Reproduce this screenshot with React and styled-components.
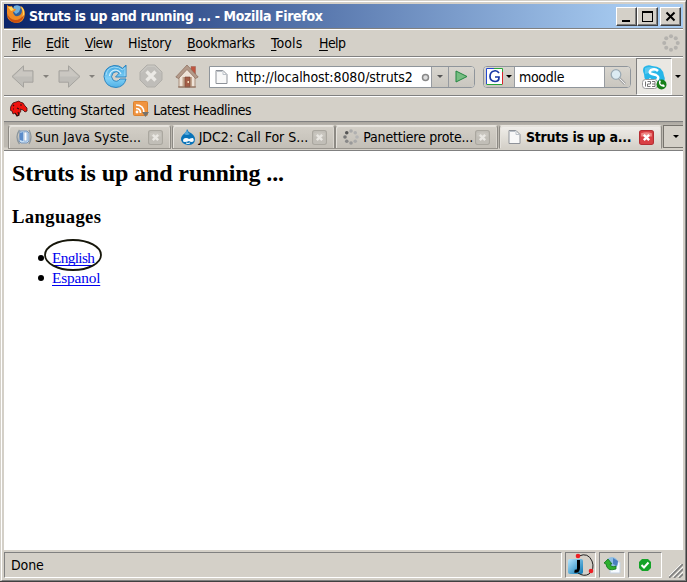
import React from "react";
import styled, { createGlobalStyle, css } from "styled-components";

const Global = createGlobalStyle`
  * { box-sizing: border-box; }
  html, body { margin: 0; padding: 0; overflow: hidden; }
`;

const Frame = styled.div`
  width: 687px;
  height: 582px;
  padding: 1px 0 0 1px;
  background: #d4d0c8;
  border-right: 1px solid #404040;
  border-bottom: 1px solid #404040;
  font: 14px/16px "DejaVu Sans Condensed", "DejaVu Sans", sans-serif;
  color: #000;
  cursor: default;
`;
const Bevel = styled.div`
  height: 100%;
  padding: 2px 2px 2px 2px;
  border: solid;
  border-width: 1px;
  border-color: #fff #808080 #808080 #fff;
  display: flex;
  flex-direction: column;
`;
const Label = styled.span`
  white-space: pre;
  letter-spacing: ${(p) => p.$ls ?? -0.2}px;
  flex: none;
`;
const Icon = styled.svg`
  display: block;
  flex: none;
  width: ${(p) => p.$w}px;
  height: ${(p) => p.$h ?? p.$w}px;
  margin: ${(p) => p.$m ?? "0"};
`;

const TitleBar = styled.header`
  height: 24px;
  padding: 0 2px 0 2px;
  display: flex;
  align-items: center;
  background: linear-gradient(90deg, #0a246a, #a6caf0 92%);
  color: #fff;
  font-weight: bold;
`;
const TitleText = styled(Label)`
  flex: 1;
  margin-left: 3px;
`;
const WinButton = styled.button`
  width: 21px;
  height: 19px;
  margin: 0 0 0 ${(p) => p.$gap || 0}px;
  padding: 0;
  display: grid;
  place-items: center;
  background: #d4d0c8;
  border: 1px solid;
  border-color: #fff #404040 #404040 #fff;
  box-shadow: inset -1px -1px #808080;
`;
const band = css`
  display: flex;
  align-items: center;
  border-bottom: 1px solid #808080;
  box-shadow: inset 0 1px #fff;
`;
const MenuBar = styled.nav`
  ${band}
  height: 29px;
  padding: 0 3px 0 8px;
  border-top: 1px solid #808080;
`;
const MenuItem = styled.span`
  width: ${(p) => p.$w}px;
  flex: none;
  white-space: pre;
  letter-spacing: ${(p) => p.$ls}px;
  u { text-underline-offset: 2px; text-decoration-skip-ink: none; text-decoration-thickness: 1px; }
`;
const Grow = styled.div`flex: 1;`;
const NavBar = styled.div`
  ${band}
  height: 39px;
  padding-left: 7px;
`;
const Caret = styled.i`
  width: 0;
  height: 0;
  flex: none;
  margin: ${(p) => p.$m || "0"};
  border: solid transparent;
  border-width: 3px 3px 0;
  border-top-color: ${(p) => p.$c || "#000"};
`;
const Field = styled.div`
  width: ${(p) => p.$w}px;
  height: 22px;
  margin: 1px 0 0 ${(p) => p.$gap}px;
  display: flex;
  flex: none;
  background: #fff;
  border: 1px solid #8f959b;
  border-radius: ${(p) => p.$left || 0}px 4px 4px ${(p) => p.$left || 0}px;
  overflow: hidden;
`;
const FieldText = styled.div`
  flex: 1;
  display: flex;
  align-items: center;
  padding-left: 4px;
`;
const FieldButton = styled.div`
  width: ${(p) => p.$w}px;
  display: flex;
  align-items: center;
  justify-content: center;
  background: linear-gradient(#d8d5ce, #c9c6bf);
  border: solid #979ba0;
  border-width: 0 ${(p) => (p.$first ? 1 : 0)}px 0 ${(p) => (p.$first ? 0 : 1)}px;
`;
const Extension = styled.div`
  width: 36px;
  height: 37px;
  margin-left: 5px;
  display: grid;
  place-items: center;
  background: #eae8e3;
  border: solid;
  border-width: 1px;
  border-color: #808080 #fff #fff #808080;
`;
const Bookmarks = styled.div`
  ${band}
  height: 26px;
  padding: 2px 0 0 6px;
`;
const TabStrip = styled.div`
  height: 29px;
  padding: 3px 0 2px 4px;
  display: flex;
  background: linear-gradient(#aaa69f, #bdb9b1 4px, #bdb9b1 25px, #d4d0c8 26px);
  border-bottom: 1px solid #808080;
`;
const Tab = styled.div`
  width: 163px;
  height: 24px;
  margin-right: ${(p) => (p.$active ? 1 : 0.67)}px;
  padding: 0 7px 0 7px;
  flex: none;
  display: flex;
  align-items: center;
  background: ${(p) => (p.$active ? "linear-gradient(#f0eeea, #d4d0c8)" : "linear-gradient(#d3cfc7, #c3bfb7)")};
  border: 1px solid #8d8a84;
  border-top-color: #e8e5df;
  border-bottom-color: ${(p) => (p.$active ? "#d4d0c8" : "#99958e")};
  border-radius: 3px 3px 0 0;
  box-shadow: inset 1px 1px #e5e2dc, inset -1px 0 #dad6cf;
  font-weight: ${(p) => (p.$active ? "bold" : "normal")};
`;
const TabTitle = styled(Label)`
  flex: 1;
  min-width: 0;
  margin-left: ${(p) => p.$gap}px;
`;
const TabMenu = styled.div`
  flex: 1;
  height: 23px;
  display: grid;
  place-items: center;
  padding-left: 5px;
  background: #d4d0c8;
  border: 1px solid #77746e;
  border-right: 0;
`;
const Page = styled.main`
  flex: 1;
  padding: 0 8px;
  background: #fff;
  font-family: "Liberation Serif", serif;
`;
const Heading = styled.h2`
  margin: 0;
  padding-top: 9px;
  font-size: 24px;
  line-height: 27px;
  letter-spacing: -0.1px;
`;
const SubHeading = styled.h3`
  margin: 19px 0 0;
  font-size: 18.7px;
  line-height: 22px;
  letter-spacing: 0.35px;
`;
const List = styled.ul`
  margin: 20px 0 0;
  padding: 0 0 0 26px;
  list-style: none;
`;
const Item = styled.li`
  height: 20px;
  display: flex;
  align-items: center;
  position: relative;
  font-size: 15.3px;
  line-height: 18px;
`;
const Link = styled.a`
  color: #0000ee;
  text-decoration: underline;
  text-decoration-skip-ink: none;
  text-decoration-thickness: 1px;
  text-underline-offset: 2px;
  letter-spacing: ${(p) => p.$ls}px;
  margin-left: 8px;
`;
const Ring = styled.svg`
  position: absolute;
  left: 6px;
  top: -9px;
  width: 58px;
  height: 32px;
`;
const StatusBar = styled.footer`
  height: 28px;
  padding-top: 2px;
  display: flex;
  gap: 3px;
`;
const Panel = styled.div`
  width: ${(p) => p.$w}px;
  height: 26px;
  padding: ${(p) => (p.$text ? "0 6px" : "0")};
  display: flex;
  align-items: center;
  justify-content: ${(p) => (p.$text ? "flex-start" : "center")};
  border: 1px solid;
  border-color: #808080 #fff #fff #808080;
`;

const Firefox = () => (
  <Icon $w={20} viewBox="0 0 20 20" $m="-4px 0 0 0">
    <circle cx="11" cy="9" r="7" fill="#2d5f9c" />
    <path d="M8 2q4-2 7 1l-2 5-3 2-3-3z" fill="#71b0dc" />
    <path d="M1 1q2 2 5 1 0 3 4 3 0 2-3 3 1 5 5 4 4-1 4-6l-2-4q5 2 5 8-1 9-9 9Q1 18 1 10z" fill="#ef8a24" />
    <path d="M1 9q2 6 8 7 6 0 9-6-1 8-8 9-8-1-9-10z" fill="#c9500f" />
    <path d="M2 3l4 0 2 3-3 1zm13-1q4 3 3 9l-2 2q2-4 0-8" fill="#ffd65a" />
  </Icon>
);
const Arrow = ({ right }) => (
  <Icon $w={23} viewBox="0 0 23 23">
    <g transform={right ? "translate(23 0) scale(-1 1)" : undefined}>
      <path d="M1 11.500L12.500 .8v5h9.500v11.400h-9.500v5z" fill="#bfbdb8" stroke="#a5a39e" />
      <path d="M2.700 11.500L11.500 3.200v3.600H21v4.700z" fill="#cac7c1" />
    </g>
  </Icon>
);
const Reload = () => (
  <Icon $w={24} $m="0 0 0 8px" viewBox="0 0 24 24">
    <defs><linearGradient id="water" x2="0" y2="1"><stop stopColor="#3fa3dc" /><stop offset=".6" stopColor="#7fd0f7" /><stop offset="1" stopColor="#4fb0e6" /></linearGradient></defs>
    <path d="M23 1v12H12.500l4-4.300Q13 6.500 10 9q-3 4 0 7 4 3 7-1h6q-2 8-10 8.500Q2 23 1 12.500 1.500 3 11 1.500q5-.5 8.500 2.800z" fill="url(#water)" stroke="#2f86c0" />
    <path d="M3 11q1-7 8-8 5 0 8.500 3L22 3.500V12" fill="none" stroke="#b6e4fb" strokeWidth=".8" />
    <path d="M18 10q-2-4-6-4-5 1-5.500 6" fill="none" stroke="#d8f2ff" strokeWidth="1.200" />
  </Icon>
);
const Stop = () => (
  <Icon $w={24} $m="0 0 0 12px" viewBox="0 0 24 24">
    <path d="M8 1h8l7 7v8l-7 7H8l-7-7V8z" fill="#bfbdb9" stroke="#b0aea9" />
    <path d="M7.500 7.500l9 9m0-9l-9 9" stroke="#ebe9e5" strokeWidth="3.300" />
    <path d="M2.200 8.500l6.300-6.300h7l6.300 6.300" fill="none" stroke="#cdcbc6" />
  </Icon>
);
const Home = () => (
  <Icon $w={24} $m="0 0 0 12px" viewBox="0 0 24 24">
    <path d="M16 2.500h4.500V10H16z" fill="#c05540" stroke="#9f6a5a" strokeWidth=".6" />
    <path d="M4 12l8-8.500L20 12v11H4z" fill="#eee2d7" stroke="#a98f7c" />
    <path d="M.8 13L12 1l11.200 12-2.700 1.500L12 5.500l-8.500 9z" fill="#b39a8a" stroke="#8a6c5a" strokeWidth=".7" />
    <path d="M7.500 13h3v10h-3zm6.500 0h3v10h-3z" fill="#c2a68f" />
    <path d="M10 13h5v10h-5z" fill="#a45d47" stroke="#7b4534" strokeWidth=".6" />
    <path d="M12.500 17h1.500v2h-1.500z" fill="#f5dfbc" />
    <path d="M3 23h18" stroke="#8a6857" />
  </Icon>
);
const Document = () => (
  <Icon $w={13} $h={16} $m="0 0 0 1px" viewBox="0 0 13 16">
    <path d="M1 1.500h7l4 4v9H1z" fill="#f8f8f8" stroke="#8e9299" />
    <path d="M8 1.500v4h4M2 2.500h5" fill="none" stroke="#bbc1c8" />
  </Icon>
);
const Feed = () => (
  <Icon $w={17} $h={17} $m="0 0 0 8px" viewBox="0 0 17 17">
    <rect x=".5" y=".5" width="14" height="14" rx="1" fill="#f09440" stroke="#dc832f" />
    <path d="M3 4q8 0 8 8M3 7.500q4.500 0 4.500 4.500" fill="none" stroke="#fff" strokeWidth="1.700" />
    <circle cx="4" cy="11" r="1.400" fill="#fff" />
    <path d="M9 11h7l-3.500 5z" fill="#77736c" />
  </Icon>
);
const Dragon = () => (
  <Icon $w={18} $h={17} $m="-2px 0 0 0" viewBox="0 0 18 17">
    <path d="M1 6l2-3 3-1 3-1 1 1 3 1 2 3 2 2v3l-2 1-2-2-3-1 1 2-2 3-1 2-3-3-2 1-1-3-2-1z" fill="#f0130d" stroke="#3d0f0e" strokeWidth=".8" />
    <path d="M5 13l2 3 2-1-1-3M3 5l1 1M3 9l1 0M10 5h2M7 8l2 1" fill="none" stroke="#350d0c" strokeWidth="1.200" />
  </Icon>
);
const dots = Array.from({ length: 8 }, (_, i) => [8 + 6 * Math.sin((i * Math.PI) / 4), 8 - 6 * Math.cos((i * Math.PI) / 4)]);
const Throbber = ({ dim }) => (
  <Icon $w={dim ? 18 : 16} viewBox="0 0 16 16">
    {dots.map(([x, y], i) => (
      <circle key={i} cx={x} cy={y} r="1.8" fill={dim ? "#b4b2ae" : ["#aaa", "#b0b0b0", "#b5b5b5", "#aaa", "#999", "#888", "#777", "#555"][i]} />
    ))}
  </Icon>
);
const SunJava = () => (
  <Icon $w={16} viewBox="0 0 16 16">
    <path d="M3.500 1q-5 7 0 14M13 1q4 7 0 14" fill="none" stroke="#8d979d" strokeWidth="1.300" />
    <path d="M4 2h7l2 2v8l-2 2H5l-2-2z" fill="#c5def5" stroke="#7996ba" />
    <path d="M4 4l3-1v9l-3-1z" fill="#5b8ccb" />
    <path d="M8 3h3v9H8z" fill="#fff" stroke="#7d9fc8" strokeWidth=".7" />
  </Icon>
);
const Drupal = () => (
  <Icon $w={16} viewBox="0 0 16 16">
    <path d="M7 0q1 3 4 4 4 3 4 6 0 6-7 6-7-1-7-6 0-3 4-6 2-2 2-4" fill="#0873b9" />
    <path d="M4 5q2-2 3-4 1 3 3 4-3 2-6 0" fill="#55a7d9" />
    <path d="M3 12q0-3 3-3 2 0 3 1 2-1 4-1 2 3-1 4-2 0-3-1-2 1-4 1-2 0-2-1" fill="#f5fbff" />
    <path d="M6 14q2 1 4 0" fill="none" stroke="#fff" />
  </Icon>
);
const CloseIcon = ({ active }) => (
  <Icon $w={15} viewBox="0 0 14 14">
    <rect x=".5" y=".5" width="13" height="13" rx="2" fill={active ? "#d93f43" : "#c1beb7"} stroke={active ? "#b52d32" : "#aaa79f"} />
    <path d="M2 3q5-2 10 0v3H2z" fill={active ? "#ef8986" : "#c9c6bf"} />
    <path d="M4.500 4.500l5 5m0-5l-5 5" stroke={active ? "#fff" : "#e9e7e2"} strokeWidth="2.300" />
  </Icon>
);
const Skype = () => (
  <Icon $w={25} viewBox="0 0 25 25" $m="2px 0 0 0">
    <path d="M2 2q4-3 8-1 11 0 12 10 2 4-1 6-4 5-9 1Q2 19 2 9 0 5 2 2" fill="#27b6e9" />
    <path d="M3 3q7-3 14 2l-6 2-8 2z" fill="#7bd5f5" opacity=".6" />
    <path d="M16 6q-3-3-7-1-3 3 1 4l4 1q4 2 1 5-4 2-8-1" fill="none" stroke="#fff" strokeWidth="2.500" />
    <rect x=".5" y="14.500" width="15" height="9" rx="3" fill="#fff" stroke="#999" />
    <path d="M3.500 16.500v5M5.500 16.500h3v2.500h-3v2.500h3M10 16.500h3v5h-3m0-2.500h3" fill="none" stroke="#666" strokeWidth=".9" />
    <circle cx="19.500" cy="19.500" r="5" fill="#168018" />
    <path d="M17 16q-1 5 5 6l1-1-2-2-1 1-2-2 1-1-1-2z" fill="#fff" />
  </Icon>
);

const menus = [["F", "ile", 34, "", -0.6], ["E", "dit", 39, "", -0.4], ["V", "iew", 43, "", -0.6], ["s", "tory", 59, "Hi", -0.2], ["B", "ookmarks", 84, "", -0.3], ["T", "ools", 48, "", 0.1], ["H", "elp", 40, "", -0.6]];
const tabs = [
  [SunJava, "Sun Java Syste...", 0.05, 3],
  [Drupal, "JDC2: Call For S...", 0, 3],
  [Throbber, "Panettiere prote...", -0.2, 4],
  [Document, "Struts is up a...", -0.25, 5],
];

export default function App() {
  return (
    <>
      <Global />
      <Frame>
        <Bevel>
          <TitleBar>
            <Firefox />
            <TitleText $ls={-0.36}>Struts is up and running ... - Mozilla Firefox</TitleText>
            <WinButton><Icon $w={15} viewBox="0 0 15 15"><path d="M3 11h8v2H3z" /></Icon></WinButton>
            <WinButton><Icon $w={15} viewBox="0 0 15 15"><path d="M2 2h11v11H2zM3 4v8h9V4z" fillRule="evenodd" /></Icon></WinButton>
            <WinButton $gap={2}><Icon $w={15} viewBox="0 0 15 15"><path d="M3.500 3.500l8 8m0-8l-8 8" stroke="#000" strokeWidth="2" /></Icon></WinButton>
          </TitleBar>
          <MenuBar>
            {menus.map(([key, rest, w, pre, ls]) => <MenuItem key={rest} $w={w} $ls={ls}>{pre}<u>{key}</u>{rest}</MenuItem>)}
            <Grow />
            <Throbber dim />
          </MenuBar>
          <NavBar>
            <Arrow /><Caret $c="#84817c" $m="0 9px 0 9px" />
            <Arrow right /><Caret $c="#84817c" $m="0 0 0 8px" />
            <Reload /><Stop /><Home />
            <Field $w={266} $gap={10}>
              <FieldText>
                <Document />
                <Label $ls={-0.1}>{"  "}http://localhost:8080/struts2</Label>
              </FieldText>
              <Icon $w={9} $m="6px 1px 0 0" viewBox="0 0 9 9"><circle cx="4.500" cy="4.500" r="3" fill="#ddd" stroke="#888" strokeWidth="1.500" /></Icon>
              <FieldButton $w={17}><Caret $c="#555" /></FieldButton>
              <FieldButton $w={26}><Icon $w={13} viewBox="0 0 13 13"><path d="M1 1l11 5.500L1 12z" fill="#77bd82" stroke="#238640" /></Icon></FieldButton>
            </Field>
            <Field $w={148} $gap={8} $left={4}>
              <FieldButton $w={31} $first>
                <Icon $w={17} viewBox="0 0 17 17">
                  <path fill="#fff" d="M1 1h15v15H1z" />
                  <path d="M.5 16V.5H8" fill="none" stroke="#2548d0" /><path d="M8 .5h8.500V4" fill="none" stroke="#29a637" /><path d="M16.500 4v12.500" stroke="#d8232a" /><path d="M16 16.500H.5" stroke="#26a339" />
                  <path d="M13 5q-2-3-5-2-4 1-4 5.500t5 5q4 0 4-4V9H9" fill="none" stroke="#1938a4" strokeWidth="1.700" />
                </Icon>
                <Caret $m="0 0 0 3px" />
              </FieldButton>
              <FieldText><Label $ls={-0.3}>moodle</Label></FieldText>
              <FieldButton $w={26}><Icon $w={18} viewBox="0 0 18 18"><path d="M10 10l6 6" stroke="#aaa" strokeWidth="3" /><path d="M10 10l6 6" stroke="#eee" /><circle cx="7" cy="6.500" r="4.800" fill="#dcebf3" stroke="#9cabb5" strokeWidth="1.300" /></Icon></FieldButton>
            </Field>
            <Extension><Skype /></Extension>
            <Caret $m="0 0 0 3px" />
          </NavBar>
          <Bookmarks>
            <Dragon />
            <Label $ls={-0.3}> Getting Started</Label>
            <Feed />
            <Label $ls={-0.45}> Latest Headlines</Label>
          </Bookmarks>
          <TabStrip>
            {tabs.map(([TabIcon, title, ls, gap], i) => (
              <Tab key={title} $active={i === 3}>
                <TabIcon /><TabTitle $ls={ls} $gap={gap}>{title}</TabTitle><CloseIcon active={i === 3} />
              </Tab>
            ))}
            <TabMenu><Caret /></TabMenu>
          </TabStrip>
          <Page>
            <Heading>Struts is up and running ...</Heading>
            <SubHeading>Languages</SubHeading>
            <List>
              <Item>
                <Icon $w={6} viewBox="0 0 6 6"><circle cx="3" cy="3" r="3" /></Icon>
                <Link $ls={-0.65}>English</Link>
                <Ring viewBox="0 0 58 32"><ellipse cx="29" cy="16" rx="28" ry="15" fill="none" stroke="#16160a" strokeWidth="1.800" /></Ring>
              </Item>
              <Item>
                <Icon $w={6} viewBox="0 0 6 6"><circle cx="3" cy="3" r="3" /></Icon>
                <Link $ls={-0.15}>Espanol</Link>
              </Item>
            </List>
          </Page>
          <StatusBar>
            <Panel $w={559} $text><Label $ls={-0.1}>Done</Label></Panel>
            <Panel $w={31}>
              <Icon $w={29} $h={24} viewBox="0 0 29 24">
                <defs><linearGradient id="tile" x2="1" y2="1"><stop stopColor="#b9e7ff" /><stop offset="1" stopColor="#0877b3" /></linearGradient></defs>
                <rect x="2" y="6" width="15" height="15" rx="2" fill="url(#tile)" />
                <path d="M13 3q9-4 13 5 3 8-3 13-5 3-11-1" fill="none" stroke="#222" />
                <path d="M12.500 7v8q0 4-4 3" fill="none" stroke="#000" strokeWidth="3" />
                <circle cx="12" cy="3" r="2.300" fill="#ed1f24" /><circle cx="25" cy="18" r="2.300" fill="#ed1f24" />
              </Icon>
            </Panel>
            <Panel $w={26}>
              <Icon $w={18} viewBox="0 0 18 18">
                <path d="M8 6h9v11H7z" fill="#f7fbff" stroke="#c6d3e2" />
                <circle cx="9" cy="7" r="6" fill="#8fbfe4" /><path d="M10 2l5 3-1 5-4-2z" fill="#4a7fc0" />
                <path d="M1 7l4-4 4 5H7q1 4 6 2v3q-9 3-10-5z" fill="#2fb02f" stroke="#12731a" strokeWidth=".8" />
              </Icon>
            </Panel>
            <Panel $w={34}>
              <Icon $w={14} viewBox="0 0 14 14"><path d="M4 1h6l3 3v6l-3 3H4l-3-3V4z" fill="#15a329" /><path d="M3.500 7l2.500 2.500 4.500-5" fill="none" stroke="#fff" strokeWidth="2" /></Icon>
            </Panel>
            <Icon $w={14} $h={14} $m="12px 0 0 4px" viewBox="0 0 14 14">
              <path d="M0 14L14 0M5 14l9-9M10 14l4-4" stroke="#808080" strokeWidth="1.600" />
              <path d="M-1 13L13-1M4 13L14 3M9 13l5-5" stroke="#fff" strokeWidth=".8" />
            </Icon>
          </StatusBar>
        </Bevel>
      </Frame>
    </>
  );
}
